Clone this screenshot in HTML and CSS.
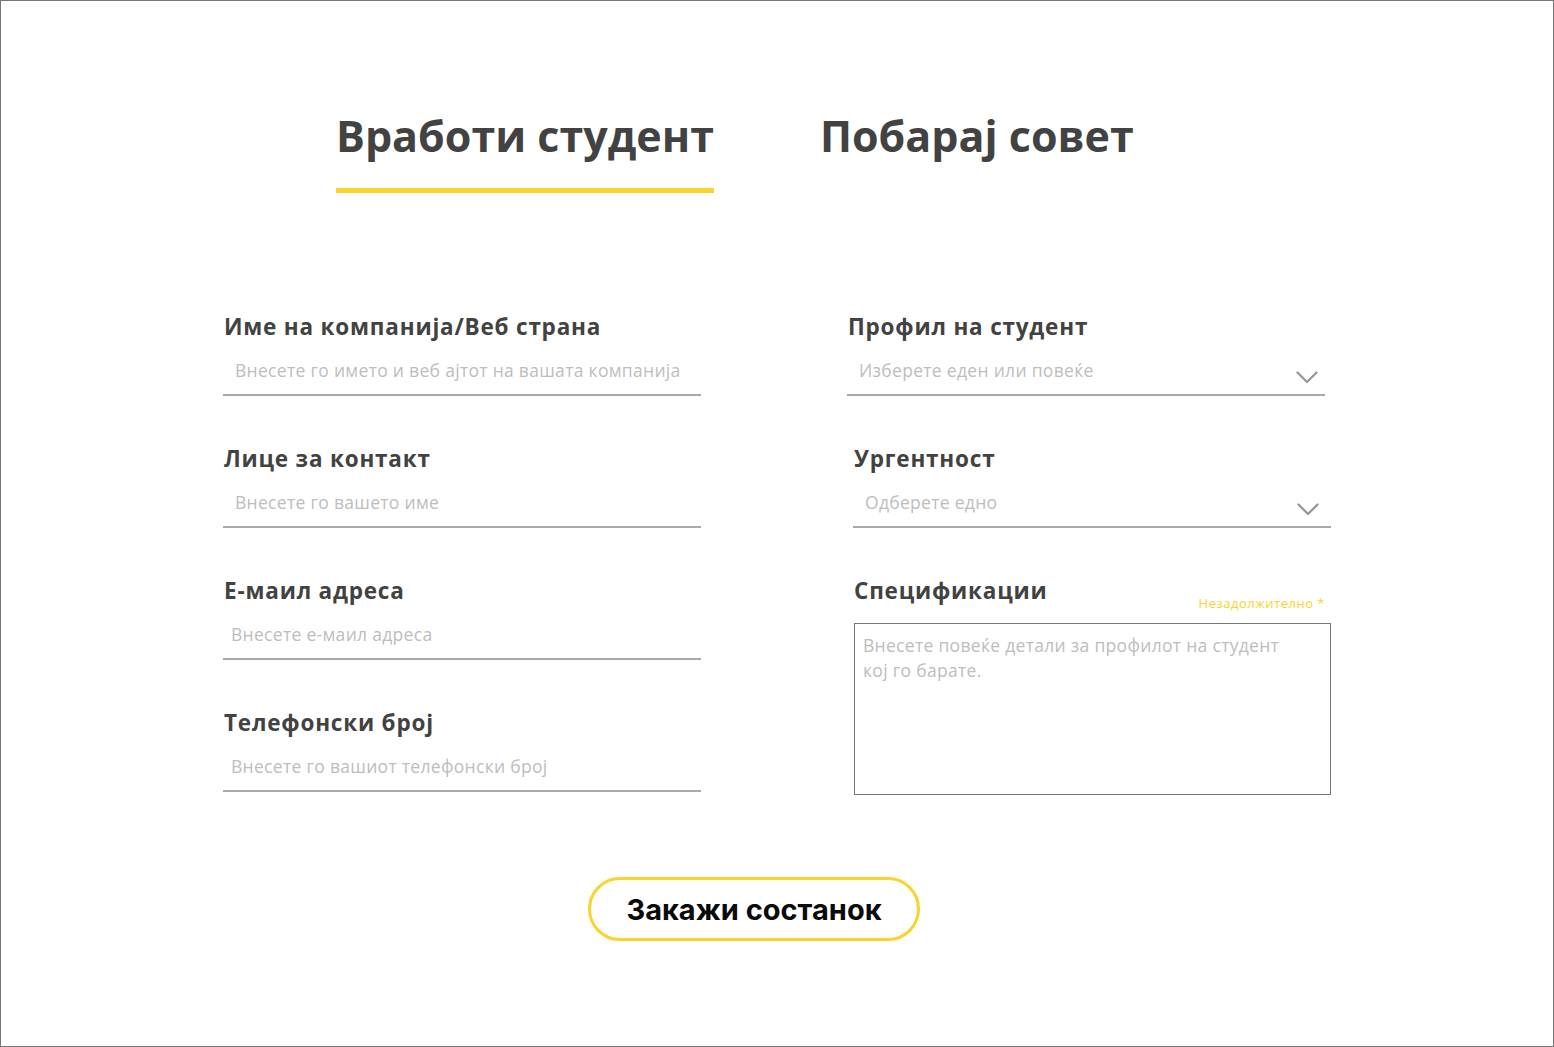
FILE: index.html
```html
<!DOCTYPE html>
<html>
<head>
<meta charset="utf-8">
<title>Вработи студент</title>
<link rel="stylesheet" href="styles.css">
</head>
<body>
<div class="page">
  <nav class="tabs">
    <a class="tab tab--active" href="#">Вработи студент</a>
    <a class="tab" href="#">Побарај совет</a>
  </nav>

  <form class="form">
    <div class="col col--left">
      <div class="field">
        <label class="label">Име на компанија/Веб страна</label>
        <input class="input pad-12" type="text" placeholder="Внесете го името и веб ајтот на вашата компанија">
      </div>
      <div class="field">
        <label class="label">Лице за контакт</label>
        <input class="input pad-12" type="text" placeholder="Внесете го вашето име">
      </div>
      <div class="field">
        <label class="label">Е-маил адреса</label>
        <input class="input pad-8" type="email" placeholder="Внесете е-маил адреса">
      </div>
      <div class="field">
        <label class="label">Телефонски број</label>
        <input class="input pad-8" type="tel" placeholder="Внесете го вашиот телефонски број">
      </div>
    </div>

    <div class="col col--right">
      <div class="field">
        <label class="label">Профил на студент</label>
        <div class="select pad-12">
          <span class="select-text">Изберете еден или повеќе</span>
          <svg class="chevron" width="22" height="13" viewBox="0 0 22 13"><path d="M1.5 1.5 L11 11 L20.5 1.5" fill="none" stroke="#9a9a9a" stroke-width="2.4" stroke-linecap="round" stroke-linejoin="round"/></svg>
        </div>
      </div>
      <div class="field field--shift">
        <label class="label">Ургентност</label>
        <div class="select pad-12 select--wide">
          <span class="select-text">Одберете едно</span>
          <svg class="chevron" width="22" height="13" viewBox="0 0 22 13"><path d="M1.5 1.5 L11 11 L20.5 1.5" fill="none" stroke="#9a9a9a" stroke-width="2.4" stroke-linecap="round" stroke-linejoin="round"/></svg>
        </div>
      </div>
      <div class="field field--shift">
        <div class="label-row">
          <label class="label">Спецификации</label>
          <span class="optional">Незадолжително *</span>
        </div>
        <textarea class="textarea" placeholder="Внесете повеќе детали за профилот на студент кој го барате."></textarea>
      </div>
    </div>
  </form>

  <div class="actions">
    <button class="btn" type="button">Закажи состанок</button>
  </div>
</div>
</body>
</html>
```

FILE: styles.css
```css
* { box-sizing: border-box; }

html, body {
  margin: 0;
  padding: 0;
  background: #fff;
}

.page {
  width: 1554px;
  height: 1047px;
  border: 1px solid #767676;
  padding-top: 105px;
  font-family: "Open Sans", "Noto Sans", sans-serif;
  color: #444;
  overflow: hidden;
}

.tabs {
  display: flex;
  gap: 106px;
  padding-left: 335px;
}

.tab {
  display: block;
  font-size: 43px;
  font-weight: 700;
  line-height: 60px;
  color: #424242;
  text-decoration: none;
  padding-bottom: 22px;
  border-bottom: 5px solid transparent;
  white-space: nowrap;
}

.tab--active {
  border-bottom-color: #fcd22b;
}

.form {
  display: flex;
  margin-top: 119px;
  padding-left: 222px;
}

.col {
  display: flex;
  flex-direction: column;
  gap: 48px;
}

.col--left { width: 478px; }
.col--right { width: 484px; margin-left: 146px; }

.field {
  width: 478px;
  display: flex;
  flex-direction: column;
}

.field--shift { margin-left: 6px; }

.label {
  display: block;
  font-size: 22.5px;
  font-weight: 700;
  line-height: 30px;
  letter-spacing: 0.8px;
  color: #424242;
  padding-left: 1px;
}

.input,
.select {
  margin-top: 16px;
  height: 38px;
  border: 0;
  border-bottom: 2px solid #a9a9a9;
  padding-top: 0;
  padding-bottom: 12px;
  padding-right: 7px;
  font-family: "Open Sans", "Noto Sans", sans-serif;
  font-size: 17.5px;
  line-height: 24px;
  letter-spacing: 0.3px;
  color: #444;
  background: transparent;
  outline: none;
  width: 100%;
}

.pad-12 { padding-left: 12px; }
.pad-8 { padding-left: 8px; }

.input::placeholder {
  color: #bdbdbd;
  opacity: 1;
}

.select {
  display: flex;
  justify-content: space-between;
  align-items: flex-start;
}

.select-text {
  color: #bdbdbd;
}

.chevron {
  display: block;
  margin-top: 13px;
}

.select--wide { padding-right: 12px; }

.label-row {
  display: flex;
  justify-content: space-between;
  align-items: flex-end;
  padding-right: 6px;
}

.optional {
  font-size: 13px;
  line-height: 18px;
  letter-spacing: 0.5px;
  color: #fcd22b;
  margin-bottom: -6px;
}

.textarea {
  margin-top: 17px;
  margin-left: 1px;
  width: 477px;
  height: 172px;
  border: 1px solid #767676;
  padding: 9px 40px 9px 8px;
  font-family: "Open Sans", "Noto Sans", sans-serif;
  font-size: 17.5px;
  line-height: 25px;
  letter-spacing: 0.3px;
  resize: none;
  outline: none;
  color: #444;
}

.textarea::placeholder {
  color: #bdbdbd;
  opacity: 1;
}

.actions {
  display: flex;
  padding-left: 587px;
  margin-top: 82px;
}

.btn {
  width: 332px;
  height: 64px;
  border: 3px solid #fcd22b;
  border-radius: 32px;
  background: #fff;
  font-family: "Inter", "Liberation Sans", sans-serif;
  font-weight: 700;
  font-size: 29px;
  color: #0a0a0a;
  cursor: pointer;
  padding: 0;
}
```
